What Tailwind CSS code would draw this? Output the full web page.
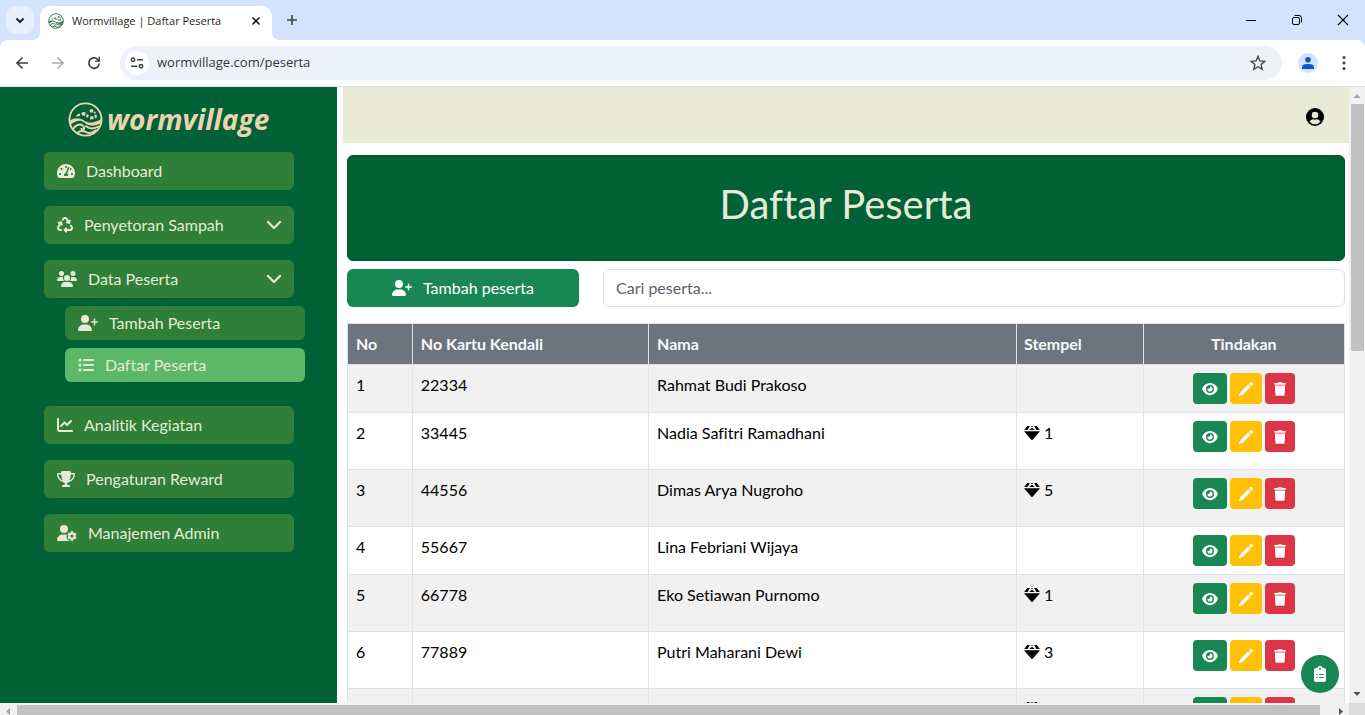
<!DOCTYPE html>
<html lang="id">
<head>
<meta charset="utf-8">
<title>Wormvillage | Daftar Peserta</title>
<script src="https://cdn.jsdelivr.net/npm/@tailwindcss/browser@4"></script>
</head>
<body class="h-screen overflow-hidden flex flex-col bg-white font-['Lato',sans-serif] [font-variant-ligatures:none] text-base text-black">
<svg class="hidden" aria-hidden="true">
  <symbol id="logo" viewBox="0 0 34 34">
    <circle cx="17" cy="17" r="15.6" fill="none" stroke="currentColor" stroke-width="1.8"/>
    <path d="M7.500 14.500q1-3 3.800-3.600l.6 2.600q-2.400 0-4.400 1zM13 10.600q2.300-1.400 4.200-.4l-.6 3.200-3-.3zM18.500 11.300l1.800 1.500-1 2.400-2-.8zM21.500 14.200l3-.4.700 2.600-3.600.6zM25.500 12.200l2.600.5-.3 2.800-1.700.3z" fill="currentColor"/>
    <circle cx="22.800" cy="8.600" r="1.900" fill="currentColor"/><circle cx="26" cy="10.200" r="1" fill="currentColor"/>
    <path d="M1.800 18C7 14.800 11 15.200 15.500 18S24 21 32.200 16.500L31.500 21c-6 3-11.500 2.500-15.500-.8-4.500-3.200-8-2.200-13.500 1.800z" fill="currentColor"/>
    <path d="M5 26.500c1.500-4 6.500-6 9.500-3.500 2.500 2.500.5 5-1.500 3M9 30c3-2.500 5.500-2.500 9-.5 3 1.500 6 .5 9-2M17.500 23.500q5 4 12 .5" fill="none" stroke="currentColor" stroke-width="1.900" stroke-linecap="round"/>
  </symbol>
  <symbol id="gauge" viewBox="0 0 576 512"><path fill="currentColor" d="M288 32C128.940 32 0 160.940 0 320c0 52.800 14.250 102.260 39.060 144.800 5.610 9.620 16.300 15.200 27.440 15.200h443c11.140 0 21.830-5.580 27.440-15.200C561.750 422.260 576 372.800 576 320c0-159.060-128.940-288-288-288zm0 64c14.710 0 26.580 10.130 30.320 23.650-1.110 2.260-2.640 4.230-3.450 6.670l-9.220 27.670c-5.130 3.490-10.970 6.010-17.640 6.010-17.670 0-32-14.330-32-32S270.330 96 288 96zM96 384c-17.670 0-32-14.330-32-32s14.330-32 32-32 32 14.330 32 32-14.330 32-32 32zm48-160c-17.670 0-32-14.330-32-32s14.330-32 32-32 32 14.330 32 32-14.330 32-32 32zm246.770-72.410l-61.330 184C343.130 347.330 352 364.540 352 384c0 11.720-3.380 22.550-8.880 32H232.880c-5.500-9.450-8.880-20.280-8.880-32 0-33.940 26.500-61.430 59.900-63.590l61.340-184.010c4.170-12.560 17.730-19.450 30.360-15.170 12.570 4.190 19.350 17.790 15.170 30.360zm14.660 57.200l15.520-46.550c3.470-1.290 7.130-2.230 11.050-2.230 17.670 0 32 14.330 32 32s-14.330 32-32 32c-11.380-.01-20.890-6.280-26.570-15.220zM480 384c-17.670 0-32-14.330-32-32s14.330-32 32-32 32 14.330 32 32-14.330 32-32 32z"/></symbol>
  <symbol id="recycle" viewBox="0 0 512 512"><path fill="currentColor" d="M174.700 45.100C192.200 17 223 0 256 0s63.800 17 81.300 45.100l38.600 61.700 27-15.600c8.400-4.900 18.900-4.200 26.600 1.700s11.100 15.900 8.600 25.300l-23.400 87.400c-3.400 12.800-16.600 20.400-29.400 17l-87.400-23.400c-9.400-2.500-16.300-10.400-17.600-20s3.400-19.100 11.800-23.900l28.400-16.400L283 79c-5.800-9.300-16-15-27-15s-21.200 5.700-27 15l-17.500 28c-9.200 14.800-28.600 19.500-43.600 10.500c-15.300-9.200-20.200-29.200-10.700-44.400l17.500-28zM429.500 251.900c15-9 34.400-4.300 43.600 10.500l24.400 39.100c9.400 15.100 14.400 32.400 14.600 50.200c.3 53.100-42.700 96.400-95.800 96.400L320 448l0 32c0 9.700-5.800 18.500-14.800 22.200s-19.300 1.700-26.200-5.200l-64-64c-9.400-9.400-9.400-24.600 0-33.900l64-64c6.900-6.900 17.200-8.900 26.200-5.200s14.800 12.500 14.800 22.200l0 32 96.200 0c17.600 0 31.900-14.400 31.800-32c0-5.900-1.700-11.700-4.800-16.700l-24.400-39.100c-9.500-15.200-4.700-35.200 10.700-44.400zm-364.600-31L36 204.200c-8.400-4.900-13.100-14.300-11.800-23.900s8.200-17.500 17.600-20l87.400-23.400c12.800-3.400 26 4.200 29.400 17L182 241.200c2.500 9.400-.9 19.300-8.600 25.300s-18.200 6.600-26.600 1.700l-26.500-15.300L68.800 335.300c-3.100 5-4.800 10.800-4.800 16.700c-.1 17.600 14.200 32 31.800 32l32.200 0c17.700 0 32 14.300 32 32s-14.300 32-32 32l-32.200 0C42.700 448-.3 404.800 0 351.600c.1-17.800 5.100-35.100 14.600-50.200l50.300-80.500z"/></symbol>
  <symbol id="users" viewBox="0 0 640 512"><path fill="currentColor" d="M144 0a80 80 0 1 1 0 160A80 80 0 1 1 144 0zM512 0a80 80 0 1 1 0 160A80 80 0 1 1 512 0zM0 298.700C0 239.800 47.800 192 106.700 192l42.700 0c15.900 0 31 3.500 44.600 9.700c-1.300 7.200-1.900 14.700-1.900 22.300c0 38.200 16.800 72.500 43.300 96c-.2 0-.4 0-.7 0L21.300 320C9.600 320 0 310.400 0 298.700zM405.300 320c-.2 0-.4 0-.7 0c26.600-23.500 43.300-57.800 43.300-96c0-7.600-.7-15-1.900-22.300c13.600-6.300 28.700-9.700 44.600-9.700l42.700 0C592.200 192 640 239.800 640 298.700c0 11.800-9.600 21.300-21.300 21.300l-213.300 0zM224 224a96 96 0 1 1 192 0 96 96 0 1 1 -192 0zM128 485.300C128 411.700 187.700 352 261.300 352l117.300 0C452.300 352 512 411.700 512 485.300c0 14.700-11.900 26.700-26.700 26.700l-330.700 0c-14.700 0-26.700-11.900-26.700-26.700z"/></symbol>
  <symbol id="user-plus" viewBox="0 0 640 512"><path fill="currentColor" d="M96 128a128 128 0 1 1 256 0A128 128 0 1 1 96 128zM0 482.300C0 383.800 79.800 304 178.300 304l91.400 0C368.200 304 448 383.800 448 482.300c0 16.400-13.300 29.700-29.700 29.700L29.700 512C13.300 512 0 498.700 0 482.300zM504 312l0-64-64 0c-13.300 0-24-10.700-24-24s10.700-24 24-24l64 0 0-64c0-13.300 10.700-24 24-24s24 10.700 24 24l0 64 64 0c13.300 0 24 10.700 24 24s-10.700 24-24 24l-64 0 0 64c0 13.300-10.700 24-24 24s-24-10.700-24-24z"/></symbol>
  <symbol id="list" viewBox="0 0 512 512"><path fill="currentColor" d="M64 144a48 48 0 1 0 0-96 48 48 0 1 0 0 96zM192 64c-17.700 0-32 14.300-32 32s14.300 32 32 32l288 0c17.700 0 32-14.300 32-32s-14.300-32-32-32L192 64zm0 160c-17.700 0-32 14.300-32 32s14.300 32 32 32l288 0c17.700 0 32-14.300 32-32s-14.300-32-32-32l-288 0zm0 160c-17.700 0-32 14.300-32 32s14.300 32 32 32l288 0c17.700 0 32-14.300 32-32s-14.300-32-32-32l-288 0zM64 464a48 48 0 1 0 0-96 48 48 0 1 0 0 96zm48-208a48 48 0 1 0 -96 0 48 48 0 1 0 96 0z"/></symbol>
  <symbol id="chart" viewBox="0 0 512 512"><path fill="currentColor" d="M64 64c0-17.700-14.300-32-32-32S0 46.300 0 64L0 400c0 44.200 35.800 80 80 80l400 0c17.700 0 32-14.300 32-32s-14.300-32-32-32L80 416c-8.800 0-16-7.200-16-16L64 64zm406.600 86.600c12.500-12.500 12.500-32.800 0-45.300s-32.800-12.500-45.300 0L320 210.700l-57.400-57.400c-12.500-12.500-32.800-12.500-45.300 0l-112 112c-12.500 12.500-12.500 32.800 0 45.300s32.800 12.500 45.300 0L240 221.300l57.400 57.400c12.500 12.500 32.800 12.500 45.300 0l128-128z"/></symbol>
  <symbol id="trophy" viewBox="0 0 576 512"><path fill="currentColor" d="M400 0L176 0c-26.500 0-48.100 21.800-47.100 48.200c.2 5.300 .4 10.600 .7 15.800L24 64C10.700 64 0 74.700 0 88c0 92.600 33.500 157 78.500 200.700c44.300 43.100 98.300 64.800 138.100 75.800c23.400 6.500 39.400 26 39.400 45.600c0 20.900-17 37.900-37.900 37.900L192 448c-17.700 0-32 14.300-32 32s14.300 32 32 32l192 0c17.700 0 32-14.300 32-32s-14.300-32-32-32l-26.100 0C337 448 320 431 320 410.100c0-19.600 15.900-39.200 39.400-45.600c39.900-11 93.900-32.700 138.200-75.800C542.500 245 576 180.600 576 88c0-13.300-10.700-24-24-24L446.400 64c.3-5.200 .5-10.400 .7-15.800C448.100 21.800 426.500 0 400 0zM48.900 112l84.400 0c9.100 90.100 29.200 150.300 51.900 190.600c-24.900-11-50.800-26.500-73.200-48.300c-32-31.100-58-76-63-142.300zM464.100 254.300c-22.400 21.800-48.300 37.300-73.200 48.300c22.700-40.300 42.800-100.500 51.900-190.600l84.400 0c-5.100 66.300-31.100 111.200-63 142.300z"/></symbol>
  <symbol id="user-gear" viewBox="0 0 640 512"><path fill="currentColor" d="M224 0a128 128 0 1 1 0 256A128 128 0 1 1 224 0zM178.300 304l91.400 0c11.800 0 23.400 1.200 34.500 3.300c-2.100 18.500 7.400 35.600 21.800 44.800c-16.600 10.600-26.700 31.600-20 53.300c4 12.900 9.400 25.500 16.400 37.600s15.200 23.100 24.400 33c15.700 16.900 39.600 18.400 57.200 8.700l0 .9c0 9.200 2.700 18.500 7.900 26.300L29.700 512C13.300 512 0 498.700 0 482.300C0 383.800 79.800 304 178.300 304zM436 218.200c0-7 4.500-13.300 11.300-14.800c10.500-2.400 21.500-3.700 32.700-3.700s22.200 1.300 32.700 3.700c6.800 1.500 11.300 7.800 11.300 14.800l0 30.600c7.900 3.400 15.400 7.700 22.300 12.800l24.900-14.300c6.100-3.500 13.700-2.700 18.500 2.400c7.600 8.100 14.300 17.200 20.100 27.200s10.300 20.400 13.500 31c2.100 6.700-1.100 13.700-7.200 17.200l-25 14.400c.4 4 .7 8.100 .7 12.300s-.2 8.200-.7 12.300l25 14.400c6.100 3.500 9.200 10.500 7.200 17.200c-3.300 10.600-7.800 21-13.500 31s-12.500 19.100-20.100 27.200c-4.800 5.100-12.500 5.900-18.500 2.400l-24.900-14.300c-6.900 5.100-14.300 9.400-22.300 12.800l0 30.600c0 7-4.500 13.300-11.300 14.800c-10.500 2.400-21.500 3.700-32.700 3.700s-22.200-1.300-32.700-3.700c-6.800-1.500-11.300-7.800-11.300-14.800l0-30.500c-8-3.400-15.600-7.700-22.500-12.900l-24.700 14.300c-6.100 3.500-13.700 2.700-18.500-2.400c-7.600-8.100-14.300-17.200-20.100-27.200s-10.300-20.400-13.500-31c-2.100-6.700 1.100-13.700 7.200-17.200l24.800-14.300c-.4-4.100-.7-8.200-.7-12.400s.2-8.300 .7-12.400L343.800 325c-6.100-3.500-9.200-10.500-7.200-17.200c3.300-10.600 7.700-21 13.500-31s12.500-19.100 20.100-27.200c4.800-5.100 12.400-5.900 18.500-2.400l24.800 14.300c6.900-5.100 14.500-9.400 22.500-12.900l0-30.500zm92.100 133.500a48.100 48.100 0 1 0 -96.100 0 48.100 48.100 0 1 0 96.100 0z"/></symbol>
  <symbol id="chevron" viewBox="0 0 16 16"><path d="M2 5l6 6 6-6" fill="none" stroke="currentColor" stroke-width="2.300" stroke-linecap="round" stroke-linejoin="round"/></symbol>
  <symbol id="eye" viewBox="0 0 576 512"><path fill="currentColor" d="M288 32c-80.800 0-145.500 36.800-192.600 80.600C48.600 156 17.300 208 2.500 243.700c-3.300 7.900-3.300 16.700 0 24.600C17.300 304 48.600 356 95.400 399.400C142.500 443.200 207.200 480 288 480s145.500-36.800 192.600-80.600c46.800-43.500 78.100-95.400 93-131.100c3.300-7.900 3.300-16.700 0-24.600c-14.900-35.700-46.200-87.700-93-131.100C433.500 68.800 368.800 32 288 32zM144 256a144 144 0 1 1 288 0 144 144 0 1 1 -288 0zm144-64c0 35.300-28.700 64-64 64c-7.100 0-13.900-1.200-20.300-3.300c-5.500-1.800-11.900 1.600-11.700 7.400c.3 6.900 1.300 13.800 3.200 20.700c13.700 51.200 66.400 81.600 117.600 67.900s81.600-66.400 67.900-117.600c-11.100-41.500-47.800-69.400-88.600-71.100c-5.800-.2-9.200 6.100-7.400 11.700c2.100 6.400 3.300 13.200 3.300 20.300z"/></symbol>
  <symbol id="pencil" viewBox="0 0 512 512"><path fill="currentColor" d="M410.300 14.100l-40 40 88 88 40-40c19-19 19-49 0-68l-20-20c-19-19-49-19-68 0zM338 86L62 362c-8 8-14 18-17 29L1 481c-6 18 12 36 30 30l90-37c11-3 21-9 29-17l276-283z"/></symbol>
  <symbol id="trash" viewBox="0 0 448 512"><path fill="currentColor" d="M135.200 17.700L128 32 32 32C14.300 32 0 46.300 0 64S14.300 96 32 96l384 0c17.700 0 32-14.300 32-32s-14.300-32-32-32l-96 0-7.200-14.300C307.400 6.800 296.300 0 284.200 0L163.800 0c-12.100 0-23.200 6.800-28.600 17.700zM416 128L32 128 53.200 467c1.600 25.300 22.600 45 47.900 45l245.800 0c25.300 0 46.300-19.700 47.900-45L416 128z"/></symbol>
  <symbol id="gem" viewBox="0 0 16 16"><path fill="currentColor" d="M3.200 1h2.600L3.600 5H.2zM7 1h2L8 2.200zM10.200 1h2.600l3 4h-3.400zM8 2.800L10.800 5H5.200zM0 6.200h16L8.400 15h-.8z"/></symbol>
  <symbol id="clipboard" viewBox="0 0 384 512"><path fill="currentColor" d="M192 0c-41.800 0-77.400 26.700-90.500 64L64 64C28.700 64 0 92.700 0 128L0 448c0 35.300 28.700 64 64 64l256 0c35.300 0 64-28.700 64-64l0-320c0-35.300-28.700-64-64-64l-37.500 0C269.400 26.700 233.800 0 192 0zm0 64a32 32 0 1 1 0 64 32 32 0 1 1 0-64zM72 272a24 24 0 1 1 48 0 24 24 0 1 1 -48 0zm104-16l128 0c8.800 0 16 7.200 16 16s-7.200 16-16 16l-128 0c-8.800 0-16-7.200-16-16s7.200-16 16-16zM72 368a24 24 0 1 1 48 0 24 24 0 1 1 -48 0zm88 0c0-8.800 7.200-16 16-16l128 0c8.800 0 16 7.200 16 16s-7.200 16-16 16l-128 0c-8.800 0-16-7.200-16-16z"/></symbol>
</svg>

<!-- Browser tab strip -->
<div class="shrink-0 h-10 bg-[#d3e3fd] flex items-end font-['Open_Sans',sans-serif]">
  <button aria-label="Cari tab" class="ml-1.5 mb-1.5 w-7 h-7 rounded-[10px] bg-[#e9f0fd] grid place-items-center"><svg class="w-3 h-3" viewBox="0 0 12 12"><path d="M2.500 4.500L6 8l3.500-3.500" fill="none" stroke="#1f1f1f" stroke-width="2"/></svg></button>
  <div class="relative ml-1.5 w-[232px] h-[34px] bg-white rounded-t-[10px] flex items-center pl-2 pr-2.5 pb-1">
    <svg class="absolute -left-2 bottom-0 w-2 h-2" viewBox="0 0 8 8"><path d="M8 0v8H0q8 0 8-8" fill="#fff"/></svg>
    <svg class="absolute -right-2 bottom-0 w-2 h-2" viewBox="0 0 8 8"><path d="M0 0v8h8Q0 8 0 0" fill="#fff"/></svg>
    <svg class="w-4 h-4 text-[#176a46]"><use href="#logo"/></svg>
    <span class="ml-2 grow text-[11px] text-[#1f1f1f] whitespace-nowrap">Wormvillage | Daftar Peserta</span>
    <button aria-label="Tutup tab" class="w-3 h-3"><svg class="w-3 h-3" viewBox="0 0 12 12"><path d="M2.500 2.500l7 7m0-7l-7 7" stroke="#1f1f1f" stroke-width="1.600"/></svg></button>
  </div>
  <button aria-label="Tab baru" class="ml-3.5 mb-3.5 w-3 h-3"><svg class="w-3 h-3" viewBox="0 0 12 12"><path d="M6 1v10M1 6h10" stroke="#444" stroke-width="1.600"/></svg></button>
  <div class="ml-auto mb-3.5 mr-4 flex gap-[34px]">
    <button aria-label="Kecilkan"><svg class="w-3 h-3" viewBox="0 0 12 12"><path d="M1 6.500h10" stroke="#000"/></svg></button>
    <button aria-label="Pulihkan"><svg class="w-3 h-3" viewBox="0 0 12 12" fill="none" stroke="#000"><rect x="1.500" y="3.500" width="7" height="7" rx="1.500"/><path d="M3.500 1.500H8q2.500 0 2.500 2.500v4.500"/></svg></button>
    <button aria-label="Tutup"><svg class="w-3 h-3" viewBox="0 0 12 12"><path d="M1 1l10 10m0-10L1 11" stroke="#000" stroke-width="1.100"/></svg></button>
  </div>
</div>

<!-- Browser toolbar -->
<div class="shrink-0 bg-[#d3e3fd]">
<div class="h-[47px] bg-white rounded-t-lg border-b border-[#dfe1e4] flex items-center pl-[15px] pr-[13px] font-['Open_Sans',sans-serif]">
  <div class="flex gap-[22px]">
    <button aria-label="Kembali"><svg class="w-3.5 h-3.5" viewBox="0 0 14 14"><path d="M13 7H2m5.500-5.500L2 7l5.500 5.500" fill="none" stroke="#3c3f43" stroke-width="1.600"/></svg></button>
    <button aria-label="Maju"><svg class="w-3.5 h-3.5" viewBox="0 0 14 14"><path d="M1 7h11M6.500 1.500L12 7l-5.500 5.500" fill="none" stroke="#adadad" stroke-width="1.600"/></svg></button>
    <button aria-label="Muat ulang"><svg class="w-3.5 h-3.5" viewBox="0 0 14 14"><path d="M12.200 7.500A5.200 5.200 0 1 1 10.800 3.500L12 5" fill="none" stroke="#3c3f43" stroke-width="1.700"/><path d="M13 .8v5H8V4.400h3.600V.8z" fill="#3c3f43"/></svg></button>
  </div>
  <div class="ml-[19px] grow h-[34px] rounded-full bg-[#ecf1fa] flex items-center pl-[5px] pr-4">
    <div class="w-6 h-6 rounded-full bg-white grid place-items-center"><svg class="w-3.5 h-3.5" viewBox="0 0 14 14" fill="none" stroke="#3c3f43" stroke-width="1.500"><circle cx="3" cy="3.700" r="1.700"/><path d="M7 3.700h6M1 10.200h6"/><circle cx="11" cy="10.200" r="1.700"/></svg></div>
    <input aria-label="Alamat" value="wormvillage.com/peserta" class="ml-2 grow text-[13px] text-[#34363a] outline-none bg-transparent">
    <button aria-label="Markahi"><svg class="w-4 h-4" viewBox="0 0 16 16"><path d="M8 1.300l1.900 4.600 4.900.4-3.700 3.200 1.100 4.800L8 11.700l-4.200 2.600 1.100-4.800L1.200 6.300l4.900-.4z" fill="none" stroke="#474747" stroke-width="1.400"/></svg></button>
  </div>
  <button aria-label="Profil" class="ml-4 w-5 h-5 rounded-full bg-[#d3e3fd] grid place-items-center"><svg class="w-3 h-3" viewBox="0 0 12 12" fill="#0b57d0"><circle cx="6" cy="2.800" r="2.800"/><path d="M0 12v-1.800Q0 7 6 7t6 3.200V12z"/></svg></button>
  <button aria-label="Menu" class="ml-[18px] w-4 h-4"><svg class="w-4 h-4" viewBox="0 0 16 16" fill="#474747"><circle cx="8" cy="2.500" r="1.600"/><circle cx="8" cy="8" r="1.600"/><circle cx="8" cy="13.500" r="1.600"/></svg></button>
</div>
</div>

<!-- Page -->
<div class="grow min-h-0 flex">
  <aside class="shrink-0 w-[337px] bg-[#006137] text-[#e8ead6] pt-3.5">
    <a href="#" class="flex items-center ml-[68px] h-9 text-[#ebd3ae]">
      <svg class="w-[35px] h-[35px]"><use href="#logo"/></svg>
      <span class="ml-1 font-['Open_Sans',sans-serif] font-bold italic text-[28px] leading-9">wormvillage</span>
    </a>
    <nav class="ml-11 mt-[15px] w-[250px] flex flex-col gap-4">
      <a href="#" class="h-[38px] px-[13px] rounded-md bg-[#2f7f38] flex items-center gap-[11px]"><svg class="w-[18px] h-4"><use href="#gauge"/></svg>Dashboard</a>
      <button class="h-[38px] px-3 pl-[13px] rounded-md bg-[#2f7f38] flex items-center gap-[11px]"><svg class="w-4 h-4"><use href="#recycle"/></svg>Penyetoran Sampah<svg class="ml-auto w-4 h-4"><use href="#chevron"/></svg></button>
      <div>
        <button class="w-full h-[38px] px-3 pl-[13px] rounded-md bg-[#2f7f38] flex items-center gap-[11px]"><svg class="w-5 h-4"><use href="#users"/></svg>Data Peserta<svg class="ml-auto w-4 h-4"><use href="#chevron"/></svg></button>
        <div class="mt-2 mb-2 ml-[21px] w-60 flex flex-col gap-2">
          <a href="#" class="h-[34px] px-[13px] rounded-md bg-[#2f7f38] flex items-center gap-[11px]"><svg class="w-5 h-4"><use href="#user-plus"/></svg>Tambah Peserta</a>
          <a href="#" aria-current="page" class="h-[34px] px-[13px] rounded-md bg-[#5bb866] flex items-center gap-[11px]"><svg class="w-4 h-4"><use href="#list"/></svg>Daftar Peserta</a>
        </div>
      </div>
      <a href="#" class="h-[38px] px-[13px] rounded-md bg-[#2f7f38] flex items-center gap-[11px]"><svg class="w-4 h-4"><use href="#chart"/></svg>Analitik Kegiatan</a>
      <a href="#" class="h-[38px] px-[13px] rounded-md bg-[#2f7f38] flex items-center gap-[11px]"><svg class="w-[18px] h-4"><use href="#trophy"/></svg>Pengaturan Reward</a>
      <a href="#" class="h-[38px] px-[13px] rounded-md bg-[#2f7f38] flex items-center gap-[11px]"><svg class="w-5 h-4"><use href="#user-gear"/></svg>Manajemen Admin</a>
    </nav>
  </aside>

  <main class="relative grow min-w-0 ml-1.5 overflow-hidden">
    <header class="h-14 bg-[#e8ead6] flex items-center justify-end pr-[25px] pt-1">
      <button aria-label="Akun"><svg class="w-[18px] h-[18px]" viewBox="0 0 18 18"><circle cx="9" cy="9" r="9" fill="#000"/><circle cx="9" cy="7" r="3.300" fill="#e8ead6"/><path d="M3.500 13.600Q5.500 11 7.500 11.200q1.500.8 3 0 2 0 4 2.400Q12.500 16.300 9 16.300t-5.500-2.700z" fill="#e8ead6"/></svg></button>
    </header>
    <div class="px-1 pt-3">
      <h1 class="h-[106px] rounded-md bg-[#006137] border border-[#00552f] text-[#e8ead6] text-[40px] leading-[48px] flex items-center justify-center pb-2">Daftar Peserta</h1>
      <div class="mt-2 flex gap-6">
        <button class="shrink-0 w-[232px] h-[38px] rounded-md bg-[#198754] text-white flex items-center justify-center gap-[11px]"><svg class="w-5 h-4"><use href="#user-plus"/></svg>Tambah peserta</button>
        <input type="text" aria-label="Cari peserta" placeholder="Cari peserta..." class="grow min-w-0 h-[38px] rounded-md border border-[#dee2e6] px-3 pb-0.5 placeholder:text-[#5d6267]">
      </div>
      <table class="mt-4 w-full table-fixed border-collapse text-left">
        <thead class="bg-[#6c757d] text-[#f8f9fa]">
          <tr>
            <th class="w-[6.500%] border border-[#dee2e6] p-2">No</th>
            <th class="w-[23.700%] border border-[#dee2e6] p-2">No Kartu Kendali</th>
            <th class="w-[36.900%] border border-[#dee2e6] p-2">Nama</th>
            <th class="w-[12.700%] border border-[#dee2e6] py-2 px-[7px]">Stempel</th>
            <th class="w-[20.200%] border border-[#dee2e6] p-2 text-center">Tindakan</th>
          </tr>
        </thead>
        <tbody id="rows"></tbody>
      </table>
    </div>
    <button aria-label="Catatan" class="absolute right-2.5 bottom-2.5 w-[38px] h-[38px] rounded-full bg-[#198754] text-white grid place-items-center"><svg class="w-3 h-4"><use href="#clipboard"/></svg></button>
  </main>

  <!-- Vertical scrollbar -->
  <div class="shrink-0 w-4 bg-[#f1f1f1] flex flex-col items-center">
    <svg class="w-4 h-[17px]" viewBox="0 0 16 17"><path d="M4.500 11L8 7l3.500 4z" fill="#a3a3a3"/></svg>
    <div class="ml-px w-[13px] h-[247px] bg-[#c1c1c1]"></div>
    <svg class="mt-auto w-4 h-[17px]" viewBox="0 0 16 17"><path d="M4.500 6L8 10l3.500-4z" fill="#505050"/></svg>
  </div>
</div>

<!-- Horizontal scrollbar -->
<div class="shrink-0 h-3 bg-[#f1f1f1] flex">
  <svg class="shrink-0 w-[17px] h-3" viewBox="0 0 17 12"><path d="M10 5v7L6 8.500z" fill="#a3a3a3"/></svg>
  <div class="mt-0.5 grow bg-[#c1c1c1]"></div>
  <svg class="shrink-0 w-[29px] h-3" viewBox="0 0 29 12"><path d="M19 5v7l4-3.500z" fill="#505050"/></svg>
  <div class="shrink-0 w-4 bg-[#dcdcdc]"></div>
</div>

<script>
// number, card, name, stamps (null: no stamp yet)
const people = [
  ["1", "22334", "Rahmat Budi Prakoso", null],
  ["2", "33445", "Nadia Safitri Ramadhani", "1"],
  ["3", "44556", "Dimas Arya Nugroho", "5"],
  ["4", "55667", "Lina Febriani Wijaya", null],
  ["5", "66778", "Eko Setiawan Purnomo", "1"],
  ["6", "77889", "Putri Maharani Dewi", "3"],
  ["", "", "", ""]
];
document.getElementById("rows").innerHTML = people.map(([no, card, name, stamps]) => `
  <tr class="align-top odd:bg-[#f1f1f1]">
    <td class="border border-[#dee2e6] p-2">${no}</td>
    <td class="border border-[#dee2e6] p-2">${card}</td>
    <td class="border border-[#dee2e6] p-2">${name}</td>
    <td class="border border-[#dee2e6] py-2 px-[7px]">${stamps === null ? "" : `<p class="mb-4 h-6 flex items-center gap-1"><svg class="w-4 h-4"><use href="#gem"/></svg>${stamps}</p>`}</td>
    <td class="border border-[#dee2e6] p-2"><div class="flex justify-center gap-[3px] text-white">
      <button aria-label="Lihat" class="w-[34px] h-[31px] rounded-sm bg-[#198754] grid place-items-center"><svg class="w-4 h-3.5"><use href="#eye"/></svg></button>
      <button aria-label="Ubah" class="w-8 h-[31px] rounded-sm bg-[#ffc107] grid place-items-center"><svg class="w-3.5 h-3.5"><use href="#pencil"/></svg></button>
      <button aria-label="Hapus" class="w-[30px] h-[31px] rounded-sm bg-[#dc3545] grid place-items-center"><svg class="w-3 h-3.5"><use href="#trash"/></svg></button>
    </div></td>
  </tr>`).join("");
</script>
</body>
</html>
